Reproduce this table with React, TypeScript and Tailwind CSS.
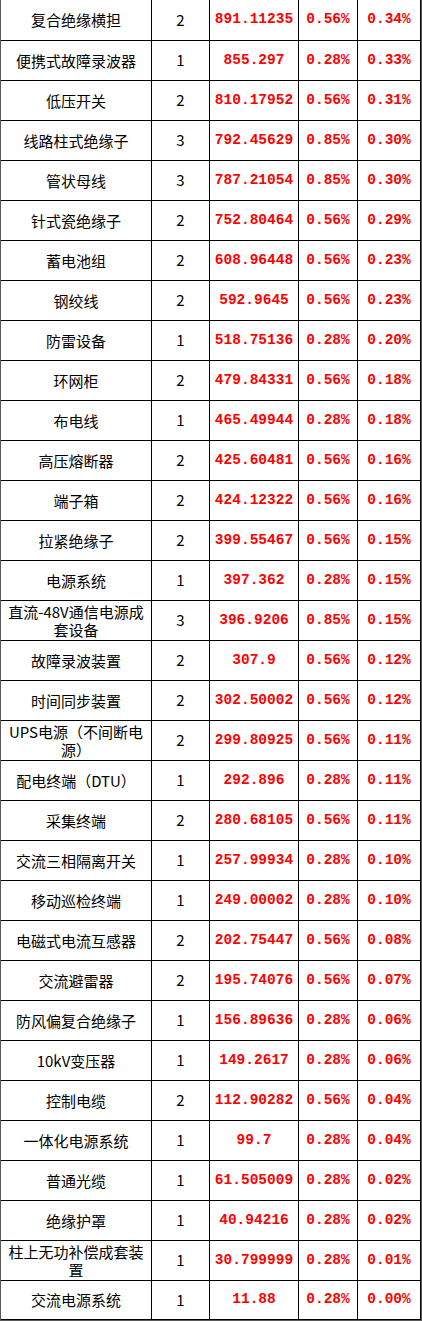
import React from "react";

// name, count, amount, share of count, share of amount
const rows: [string, number, string, string, string][] = [
  ["复合绝缘横担", 2, "891.11235", "0.56%", "0.34%"],
  ["便携式故障录波器", 1, "855.297", "0.28%", "0.33%"],
  ["低压开关", 2, "810.17952", "0.56%", "0.31%"],
  ["线路柱式绝缘子", 3, "792.45629", "0.85%", "0.30%"],
  ["管状母线", 3, "787.21054", "0.85%", "0.30%"],
  ["针式瓷绝缘子", 2, "752.80464", "0.56%", "0.29%"],
  ["蓄电池组", 2, "608.96448", "0.56%", "0.23%"],
  ["钢绞线", 2, "592.9645", "0.56%", "0.23%"],
  ["防雷设备", 1, "518.75136", "0.28%", "0.20%"],
  ["环网柜", 2, "479.84331", "0.56%", "0.18%"],
  ["布电线", 1, "465.49944", "0.28%", "0.18%"],
  ["高压熔断器", 2, "425.60481", "0.56%", "0.16%"],
  ["端子箱", 2, "424.12322", "0.56%", "0.16%"],
  ["拉紧绝缘子", 2, "399.55467", "0.56%", "0.15%"],
  ["电源系统", 1, "397.362", "0.28%", "0.15%"],
  ["直流-48V通信电源成套设备", 3, "396.9206", "0.85%", "0.15%"],
  ["故障录波装置", 2, "307.9", "0.56%", "0.12%"],
  ["时间同步装置", 2, "302.50002", "0.56%", "0.12%"],
  ["UPS电源（不间断电源）", 2, "299.80925", "0.56%", "0.11%"],
  ["配电终端（DTU）", 1, "292.896", "0.28%", "0.11%"],
  ["采集终端", 2, "280.68105", "0.56%", "0.11%"],
  ["交流三相隔离开关", 1, "257.99934", "0.28%", "0.10%"],
  ["移动巡检终端", 1, "249.00002", "0.28%", "0.10%"],
  ["电磁式电流互感器", 2, "202.75447", "0.56%", "0.08%"],
  ["交流避雷器", 2, "195.74076", "0.56%", "0.07%"],
  ["防风偏复合绝缘子", 1, "156.89636", "0.28%", "0.06%"],
  ["10kV变压器", 1, "149.2617", "0.28%", "0.06%"],
  ["控制电缆", 2, "112.90282", "0.56%", "0.04%"],
  ["一体化电源系统", 1, "99.7", "0.28%", "0.04%"],
  ["普通光缆", 1, "61.505009", "0.28%", "0.02%"],
  ["绝缘护罩", 1, "40.94216", "0.28%", "0.02%"],
  ["柱上无功补偿成套装置", 1, "30.799999", "0.28%", "0.01%"],
  ["交流电源系统", 1, "11.88", "0.28%", "0.00%"],
];

const cell = "flex items-center justify-center text-center border-r border-black";
const red = "font-['Liberation_Mono',monospace] font-bold text-[14.5px] text-[#ff0000]";

export default function App() {
  return (
    <div className="w-[422px] bg-white border-l border-r border-b border-[#5a5a5a] font-['Noto_Sans_CJK_SC',sans-serif] text-black">
      {rows.map(([name, count, amount, p1, p2], i) => (
        <div
          key={i}
          className={
            "grid grid-cols-[151px_58px_89px_59px_63px] border-b border-black " +
            (i === 0 ? "h-[41px]" : i === rows.length - 1 ? "h-[39px]" : "h-[40px]")
          }
        >
          <div className={cell + " px-[4px] text-[15px] leading-[18px]"}>{name}</div>
          <div className={cell + " text-[15px]"}>{count}</div>
          <div className={cell + " " + red}>{amount}</div>
          <div className={cell + " " + red}>{p1}</div>
          <div className={cell + " " + red}>{p2}</div>
        </div>
      ))}
    </div>
  );
}
